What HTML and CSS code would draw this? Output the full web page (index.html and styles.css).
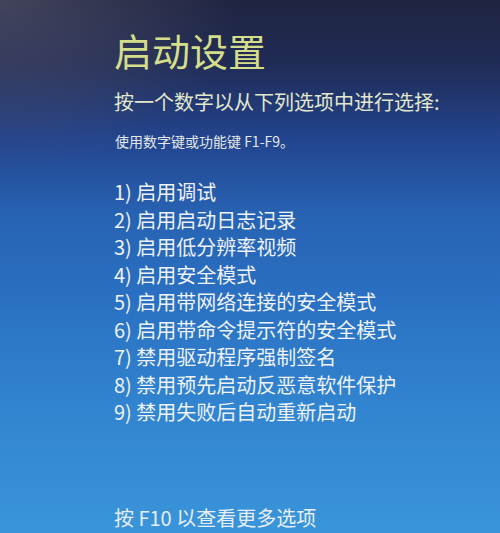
FILE: index.html
```html
<!DOCTYPE html>
<html lang="zh-CN">
<head>
<meta charset="utf-8">
<title>启动设置</title>
<link rel="stylesheet" href="styles.css">
</head>
<body>
<main class="screen">
  <h1 class="title">启动设置</h1>
  <p class="subtitle">按一个数字以从下列选项中进行选择:</p>
  <p class="hint">使用数字键或功能键 F1-F9。</p>
  <ol class="options">
    <li>1) 启用调试</li>
    <li>2) 启用启动日志记录</li>
    <li>3) 启用低分辨率视频</li>
    <li>4) 启用安全模式</li>
    <li>5) 启用带网络连接的安全模式</li>
    <li>6) 启用带命令提示符的安全模式</li>
    <li>7) 禁用驱动程序强制签名</li>
    <li>8) 禁用预先启动反恶意软件保护</li>
    <li>9) 禁用失败后自动重新启动</li>
  </ol>
  <p class="more">按 F10 以查看更多选项</p>
</main>
</body>
</html>
```
FILE: styles.css
```css
html, body {
  margin: 0;
  padding: 0;
  width: 500px;
  height: 533px;
  overflow: hidden;
}
body {
  font-family: "Noto Sans CJK SC", "Noto Sans", sans-serif;
  background:
    radial-gradient(ellipse 240px 170px at 0 0, rgba(90, 88, 110, 0.6), rgba(90, 88, 110, 0) 100%),
    linear-gradient(180deg, #1f2440 0%, #202c56 12%, #23448e 26%, #2762b2 40%, #2a70c2 56%, #3184cf 76%, #3a95da 100%);
}
.screen {
  padding: 31px 0 0 114px;
  display: flex;
  flex-direction: column;
}
.title {
  margin: 0;
  font-size: 38px;
  line-height: 38px;
  font-weight: 400;
  color: #d4de8a;
}
.subtitle {
  margin: 21px 0 0;
  font-size: 20px;
  line-height: 24px;
  color: #e2e8cc;
}
.hint {
  margin: 18px 0 0 1px;
  font-size: 14px;
  line-height: 18px;
  color: #e2e8e4;
}
.options {
  list-style: none;
  margin: 28px 0 0;
  padding: 0;
  font-size: 20px;
  line-height: 27.5px;
  color: #eef2f6;
}
.more {
  margin: 82px 0 0;
  font-size: 20px;
  line-height: 20px;
  color: #e8eef6;
}
```
